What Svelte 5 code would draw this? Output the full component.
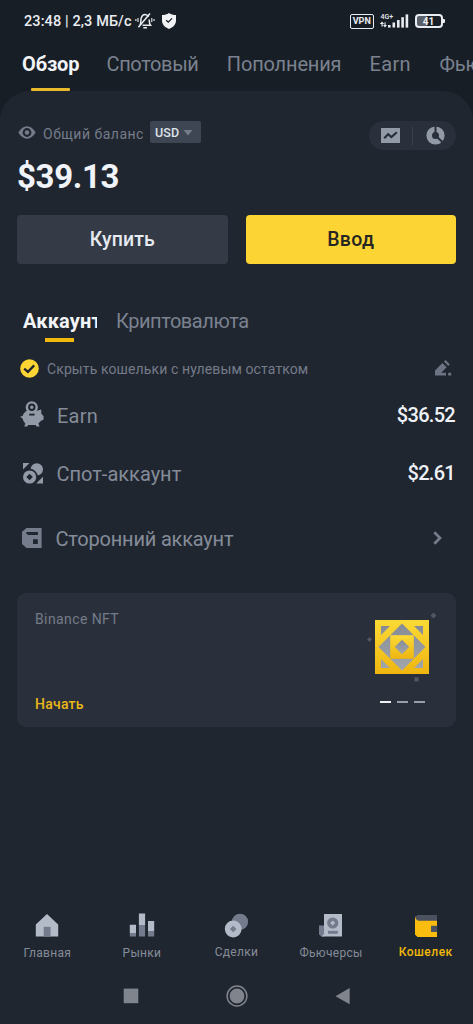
<script>
  const rows = [
    { icon: 'pig', label: 'Earn', value: '$36.52' },
    { icon: 'spot', label: 'Спот-аккаунт', value: '$2.61' },
    { icon: 'wallet', label: 'Сторонний аккаунт', value: null }
  ];
  const nav = [
    { icon: 'home', label: 'Главная' },
    { icon: 'bars', label: 'Рынки' },
    { icon: 'trade', label: 'Сделки' },
    { icon: 'futures', label: 'Фьючерсы' },
    { icon: 'purse', label: 'Кошелек' }
  ];
</script>

<div class="screen">
  <header class="status">
    <span class="clock">23:48 | 2,3 МБ/с</span>
    <svg class="bell" width="20" height="18" viewBox="0 0 20 18" fill="none" stroke="#e9ecf0" stroke-width="1.5">
      <path d="M5 13.2 C6.2 11.5 5.6 8 6.2 6 C7 3.6 8.5 2.6 10 2.6 C11.5 2.6 12.7 3.4 13.4 5 M14.2 7.5 C14.3 10 14.4 12 15.5 13.2 H7.5 M8.3 15.8 H12" />
      <path d="M3.4 15.2 L15 1.6" />
      <path d="M3 6 V10 M0.9 7 V9 M16.8 6 V10 M19 7 V9" stroke-width="1.1" />
    </svg>
    <svg class="shield" width="16" height="18" viewBox="0 0 16 18">
      <path d="M8 1 C10 2.5 12.5 3.1 15 3.1 V8.5 C15 12.5 12 15.5 8 17 C4 15.5 1 12.5 1 8.5 V3.1 C3.5 3.1 6 2.5 8 1Z" fill="#f0f2f4" />
      <path d="M5.2 8.2 L7.3 10.2 L11 6.4" fill="none" stroke="#181e26" stroke-width="1.3" />
    </svg>
    <div class="right">
      <span class="vpn">VPN</span>
      <div class="signal">
        <span class="net">4G+</span>
        <svg width="30" height="14" viewBox="0 0 30 14" fill="#e9ecf0">
          <path d="M3 7.4 L5.2 10 H3.7 V12.6 H2.5 V10 H.8Z M6 13.4 L4 10.9 H5.5 V8.2 H6.6 V10.9 H8Z" />
          <rect x="9" y="11" width="2.6" height="2.6" /><rect x="13.5" y="8.5" width="2.6" height="5" /><rect x="18" y="6" width="2.6" height="7.6" /><rect x="22.3" y="3.2" width="2.6" height="10.4" /><rect x="26.6" y=".4" width="2.6" height="13.2" />
        </svg>
      </div>
      <div class="battery"><span>41</span></div>
      <i class="tip"></i>
    </div>
  </header>

  <nav class="tabs">
    <span class="t on">Обзор</span>
    <span class="t t2">Спотовый</span>
    <span class="t t3">Пополнения</span>
    <span class="t t4">Earn</span>
    <span class="t">Фьючерсы</span>
  </nav>

  <main>
    <section class="top">
      <svg class="eye" width="18" height="13" viewBox="0 0 18 13"><path d="M.3 6.5 C3 2.5 5.6.3 9 .3 S15 2.5 17.7 6.5 C15 10.5 12.4 12.7 9 12.7 S3 10.5.3 6.5Z" fill="#747b8a" /><circle cx="9" cy="6.5" r="4.4" fill="#202630" /><circle cx="9" cy="6.5" r="2.3" fill="#747b8a" /></svg>
      <span class="lbl">Общий баланс</span>
      <span class="usd">USD<svg width="10" height="6" viewBox="0 0 10 6"><path d="M.5 0H9.5L5 5.5Z" fill="#757c89" /></svg></span>
      <div class="pill">
        <svg width="19" height="15" viewBox="0 0 19 15"><path d="M0 0H19V15H0Z" fill="#929aa7" /><path d="M3.2 10.3 L7.2 6.2 L10.4 9 L15.8 4.2" fill="none" stroke="#262d38" stroke-width="2.1" /></svg>
        <i></i>
        <svg width="19" height="19" viewBox="0 0 19 19"><circle cx="9.5" cy="9.5" r="6.3" fill="none" stroke="#929aa7" stroke-width="5.6" /><path d="M9.5 0V9.5L16.6 16.2" fill="none" stroke="#2a303b" stroke-width="2" /></svg>
      </div>
    </section>
    <div class="amount">$39.13</div>
    <div class="buttons"><button class="buy">Купить</button><button class="dep">Ввод</button></div>

    <div class="sub"><span class="acc"><b>Аккаунт</b></span><span class="cr">Криптовалюта</span></div>

    <div class="hide">
      <svg width="19" height="19" viewBox="0 0 19 19"><circle cx="9.5" cy="9.5" r="9.3" fill="#fcd535" /><path d="M4.2 9.6 L7.9 12.8 L14.2 6.4" fill="none" stroke="#202630" stroke-width="2.3" /></svg>
      <span>Скрыть кошельки с нулевым остатком</span>
      <svg class="edit" width="17" height="16" viewBox="0 0 17 16" fill="#6c7382"><path d="M0 10.4 L7.4 3 L11.7 7.3 L6.2 12.8 H11 V15.6 H0Z M8.9 1.6 L10.5 0 L14.8 4.3 L13.2 5.9Z M13.2 12.8H16.2V15.6H13.2Z" /></svg>
    </div>

    {#each rows as r}
      <div class="row {r.icon}">
        <div class="ic">
          {#if r.icon === 'pig'}
            <svg width="24" height="26" viewBox="0 0 24 26"><path d="M0 15.8 L2.6 14.9 C3.6 12.3 5.2 10.8 7 9.8 H17 L21.3 8.5 V12.4 L23.6 15.2 V18.4 L20.8 20 L18.4 22.6 L19.6 25.6 H16.6 L15.6 24 H8.2 L7.2 25.6 H4.2 L5.4 22.6 C4 21.4 3 19.6 2.6 17.6Z" fill="#929aa7" /><circle cx="11.8" cy="6.3" r="6.1" fill="#929aa7" /><circle cx="11.8" cy="6.2" r="2.7" fill="none" stroke="#202630" stroke-width="2" /><path d="M9.2 13.6H14.6" stroke="#202630" stroke-width="1.8" /></svg>
          {:else if r.icon === 'spot'}
            <svg width="20" height="21" viewBox="0 0 20 21" fill="#929aa7"><path d="M0 0H6.5L0 6.5Z M20 13.8V20.6H13.2Z" /><circle cx="13.8" cy="6.4" r="6.2" /><circle cx="6.6" cy="14" r="8.3" fill="#202630" /><circle cx="6.6" cy="14" r="6.6" /><path d="M6.6 10.8 L9.8 14 L6.6 17.2 L3.4 14Z" fill="#202630" /></svg>
          {:else}
            <svg width="20" height="20" viewBox="0 0 20 20"><path d="M4.5 0H19.6V20H4.5L0 16V3.8Z" fill="#757c8b" /><path d="M4.3 4.1H15.9V7H6.2L4.3 5.6Z M11 11.2H15.8V16H11Z" fill="#202630" /></svg>
          {/if}
        </div>
        <span class="name">{r.label}</span>
        {#if r.value}<span class="val">{r.value}</span>{:else}<svg class="chev" width="9" height="14" viewBox="0 0 9 14"><path d="M1.3 1.3 L7 7 L1.3 12.7" fill="none" stroke="#757c8b" stroke-width="2.7" /></svg>{/if}
      </div>
    {/each}

    <section class="card">
      <div class="left"><span>Binance NFT</span><span class="start">Начать</span></div>
      <div class="art">
        <svg width="74" height="74" viewBox="0 0 74 74">
          <defs>
            <linearGradient id="gold" x2="0" y2="1"><stop stop-color="#fbda35" /><stop offset="1" stop-color="#efb510" /></linearGradient>
            <linearGradient id="steel" x2="0" y2="1"><stop stop-color="#858b96" /><stop offset="1" stop-color="#a1a6ac" /></linearGradient>
          </defs>
          <path d="M10 8H64V62H10Z" fill="url(#gold)" />
          <path d="M37 11.5 L60.5 35 L37 58.5 L13.5 35Z M16 14H25L16 23Z M58 14V23L49 14Z M16 56V47L25 56Z M58 56H49L58 47Z" fill="url(#steel)" />
          <path d="M25.2 23.2H48.8V46.8H25.2Z" fill="url(#gold)" />
          <path d="M37 27.8 L44.2 35 L37 42.2 L29.8 35Z" fill="url(#steel)" />
          <path d="M68.5 .5 L71.5 3.5 L68.5 6.5 L65.5 3.5Z M4.5 25 L7 27.5 L4.5 30 L2 27.5Z M49.4 65.3H53.6V69.5H49.4Z" fill="#515762" />
        </svg>
        <div class="dash"><i></i><i></i><i></i></div>
      </div>
    </section>
  </main>

  <footer>
    <div class="nav">
      {#each nav as n}
        <div class="item {n.icon}">
          <svg width="26" height="26" viewBox="0 0 26 26">
            {#if n.icon === 'home'}<path d="M13 2 L24.2 12.5V24.6H1.8V12.5Z" fill="#b3bbc9" /><path d="M9.7 14.8H16.6V24.6H9.7Z" fill="#747b8c" />
            {:else if n.icon === 'bars'}<path d="M.8 12.8H7V21H.8Z M9.9 1.5H16.1V13H9.9Z M19 9H25.2V19H19Z" fill="#b3bbc9" /><path d="M.8 21H7V24.6H.8Z M9.9 13H16.1V24.6H9.9Z M19 19H25.2V24.6H19Z" fill="#747b8c" />
            {:else if n.icon === 'trade'}<circle cx="17" cy="9.8" r="8.1" fill="#747b8c" /><circle cx="10.2" cy="17" r="8.4" fill="#b3bbc9" /><path d="M10.2 13.7 L13.5 17 L10.2 20.3 L6.9 17Z" fill="#747b8c" />
            {:else if n.icon === 'futures'}<path d="M1 13.5H6.5V24.6H3.5L1 22.5Z" fill="#747b8c" /><path d="M6 2H24V24.6H3.5L6 22Z" fill="#b3bbc9" /><circle cx="14.7" cy="11" r="5.6" fill="#747b8c" /><path d="M14.7 8.5L17.2 11L14.7 13.5L12.2 11Z" fill="#b3bbc9" /><path d="M10 18.8H19.8V21.8H10Z" fill="#747b8c" />
            {:else}<path d="M2 4.5 L5 3H24V9H2Z" fill="#4b515f" /><path d="M2 4.5 C3 7.5 4 8.8 6 8.8H24V25H4.5L2 22.5Z" fill="#fabd0f" /><path d="M18 13.8H24.2V20H18Z" fill="#4b515f" />{/if}
          </svg>
          <span>{n.label}</span>
        </div>
      {/each}
    </div>
    <div class="sys">
      <svg width="24" height="24" viewBox="0 0 24 24"><path d="M4.7 4.6H19.3V19.2H4.7Z" fill="#80858d" /></svg>
      <svg width="24" height="24" viewBox="0 0 24 24"><circle cx="12" cy="12" r="9.9" fill="none" stroke="#80858d" stroke-width="1.5" /><circle cx="12" cy="12" r="7.4" fill="#80858d" /></svg>
      <svg width="24" height="24" viewBox="0 0 24 24"><path d="M18.7 4V20.3L4.5 12.2Z" fill="#80858d" /></svg>
    </div>
  </footer>
</div>

<style>
  :global(body) { background: #181e26; }
  .screen { width: 473px; height: 1024px; display: flex; flex-direction: column; overflow: hidden; background: #181e26; color: #848b99; font-family: Roboto, "Noto Sans", sans-serif; }
  svg { display: block; flex: none; }
  .status { height: 42px; flex: none; display: flex; align-items: center; padding: 0 29px 0 24px; box-sizing: border-box; color: #e9ecf0; }
  .clock { font-size: 14.5px; font-weight: 500; letter-spacing: .1px; width: 110.5px; white-space: nowrap; line-height: 20px; padding-top: 1px; }
  .shield { margin-left: 6px; }
  .right { margin-left: auto; display: flex; align-items: center; }
  .vpn { width: 23.5px; height: 15px; box-sizing: border-box; border: 1.5px solid #e9ecf0; border-radius: 2px; font-size: 9px; font-weight: 700; line-height: 13px; text-align: center; }
  .signal { width: 30px; height: 14px; margin-left: 5.5px; position: relative; }
  .net { position: absolute; left: 1.5px; top: -1.5px; font-size: 7px; line-height: 8px; font-weight: 500; }
  .battery { margin-left: 5.5px; width: 28px; height: 14px; box-sizing: border-box; border: 2px solid #e9ecf0; border-radius: 4px; background: linear-gradient(90deg, #59606a 0 42%, transparent 42%); font-size: 10px; line-height: 11px; font-weight: 700; text-align: center; }
  .tip { width: 2px; height: 4px; background: #e9ecf0; border-radius: 0 1px 1px 0; margin-left: .5px; margin-right: -1px; }

  .tabs { height: 49px; flex: none; display: flex; padding-left: 22px; font-size: 20px; line-height: 45px; white-space: nowrap; color: #7b828f; }
  .t { letter-spacing: -.1px; flex: none; }
  .on { color: #f2f4f7; font-weight: 700; letter-spacing: -.15px; width: 84.5px; position: relative; }
  .on::after { content: ""; position: absolute; left: 9px; top: 46px; width: 39px; height: 3px; border-radius: 1px; background: #e9b92c; }
  .t2 { width: 120.3px; letter-spacing: -.36px; }
  .t3 { width: 142.7px; letter-spacing: -.16px; }
  .t4 { width: 70px; letter-spacing: .35px; }

  main { flex: 1; background: #202630; border-radius: 30px 30px 0 0; padding: 30px 17px 0; display: flex; flex-direction: column; }
  .top { height: 29px; display: flex; align-items: flex-start; }
  .eye { margin: 5px 7px 0 1px; }
  .lbl { font-size: 14px; line-height: 26px; letter-spacing: .5px; width: 107px; white-space: nowrap; color: #757c8a; }
  .usd { width: 51px; height: 22px; box-sizing: border-box; padding: 1px 0 0 5px; background: #3f4653; border-radius: 2px; color: #dfe3ea; font-size: 12.5px; font-weight: 500; letter-spacing: .1px; display: flex; align-items: center; gap: 4px; line-height: 22px; }
  .pill { margin-left: auto; width: 87px; height: 29px; border-radius: 15px; background: #2a303b; display: flex; align-items: center; justify-content: space-between; padding: 0 11.5px 0 12px; box-sizing: border-box; }
  .pill i { width: 1px; height: 18px; background: #3a414d; }
  .amount { height: 65px; font-size: 33px; font-weight: 700; line-height: 53px; letter-spacing: -.35px; color: #f0f3f8; }
  .buttons { display: flex; gap: 18px; height: 48.5px; }
  button { flex: 1; border: 0; padding: 2px 0 0; border-radius: 4px; font-family: inherit; font-size: 19.5px; font-weight: 500; line-height: 46.5px; }
  .buy { background: #343a46; color: #e7eaf0; letter-spacing: .1px; }
  .dep { background: #fcd535; color: #272522; letter-spacing: .3px; }
  .sub { height: 42px; margin-top: 36.5px; display: flex; font-size: 20px; line-height: 42px; padding-left: 6px; color: #7b828f; }
  .acc { width: 93px; position: relative; color: #f2f4f7; letter-spacing: .15px; }
  .acc b { display: block; width: 74px; overflow: hidden; font-weight: 700; }
  .acc::after { content: ""; position: absolute; left: 21.5px; top: 38px; width: 29.5px; height: 3.5px; background: #f0b90b; }
  .cr { letter-spacing: -.45px; }
  .hide { height: 20px; margin-top: 16px; margin-bottom: 1px; display: flex; align-items: center; padding-left: 3px; font-size: 14px; letter-spacing: .11px; color: #747b89; }
  .hide span { margin-left: 8px; padding-top: 2px; }
  .edit { margin-left: auto; margin-right: 4px; }
  .row { display: flex; align-items: center; height: 58px; }
  .row.pig { margin-top: 7px; }
  .row.wallet { height: 72px; }
  .ic { display: flex; }
  .pig .ic { padding-left: 3px; width: 37px; margin-top: -2px; }
  .spot .ic { padding-left: 6px; width: 33.5px; }
  .wallet .ic { padding-left: 5px; width: 33.5px; }
  .pig .ic, .spot .ic, .wallet .ic { box-sizing: content-box; }
  .name { font-size: 20px; line-height: 24px; color: #858c99; letter-spacing: 0; padding-top: 1px; }
  .pig .name { letter-spacing: .25px; }
  .wallet .name { letter-spacing: -.2px; }
  .val { margin-left: auto; font-size: 20px; font-weight: 500; line-height: 24px; letter-spacing: -.7px; color: #eef1f6; padding-right: 1px; }
  .chev { margin-left: auto; margin-right: 14px; }
  .card { margin-top: 18.5px; height: 134.5px; flex: none; box-sizing: border-box; border-radius: 9px; background: #2a303b; display: flex; justify-content: space-between; padding: 15.5px 17px 12px 18px; }
  .left { display: flex; flex-direction: column; justify-content: space-between; font-size: 14px; line-height: 22px; letter-spacing: .4px; color: #747b89; }
  .left .start { color: #e9b718; font-weight: 500; letter-spacing: .25px; }
  .art { width: 74px; display: flex; flex-direction: column; padding-top: 4px; }
  .dash { display: flex; gap: 6px; padding-left: 14.5px; margin-top: 14.5px; }
  .dash i { width: 11px; height: 2px; background: #9a9fa9; }
  .dash i:first-child { background: #eef0f3; }

  footer { height: 113px; flex: none; background: #202630; }
  .nav { display: flex; height: 53px; padding-top: 1px; box-sizing: border-box; }
  .item { flex: 1; display: flex; flex-direction: column; align-items: center; font-size: 12px; line-height: 16px; letter-spacing: .3px; color: #858c99; }
  .item svg { margin-bottom: 7px; }
  .item.trade svg, .item.purse svg { margin-bottom: 6px; }
  .item.purse { color: #f0b90b; font-weight: 500; letter-spacing: .5px; }
  .sys { height: 60px; display: flex; justify-content: center; gap: 82px; padding-top: 20px; box-sizing: border-box; }
</style>
